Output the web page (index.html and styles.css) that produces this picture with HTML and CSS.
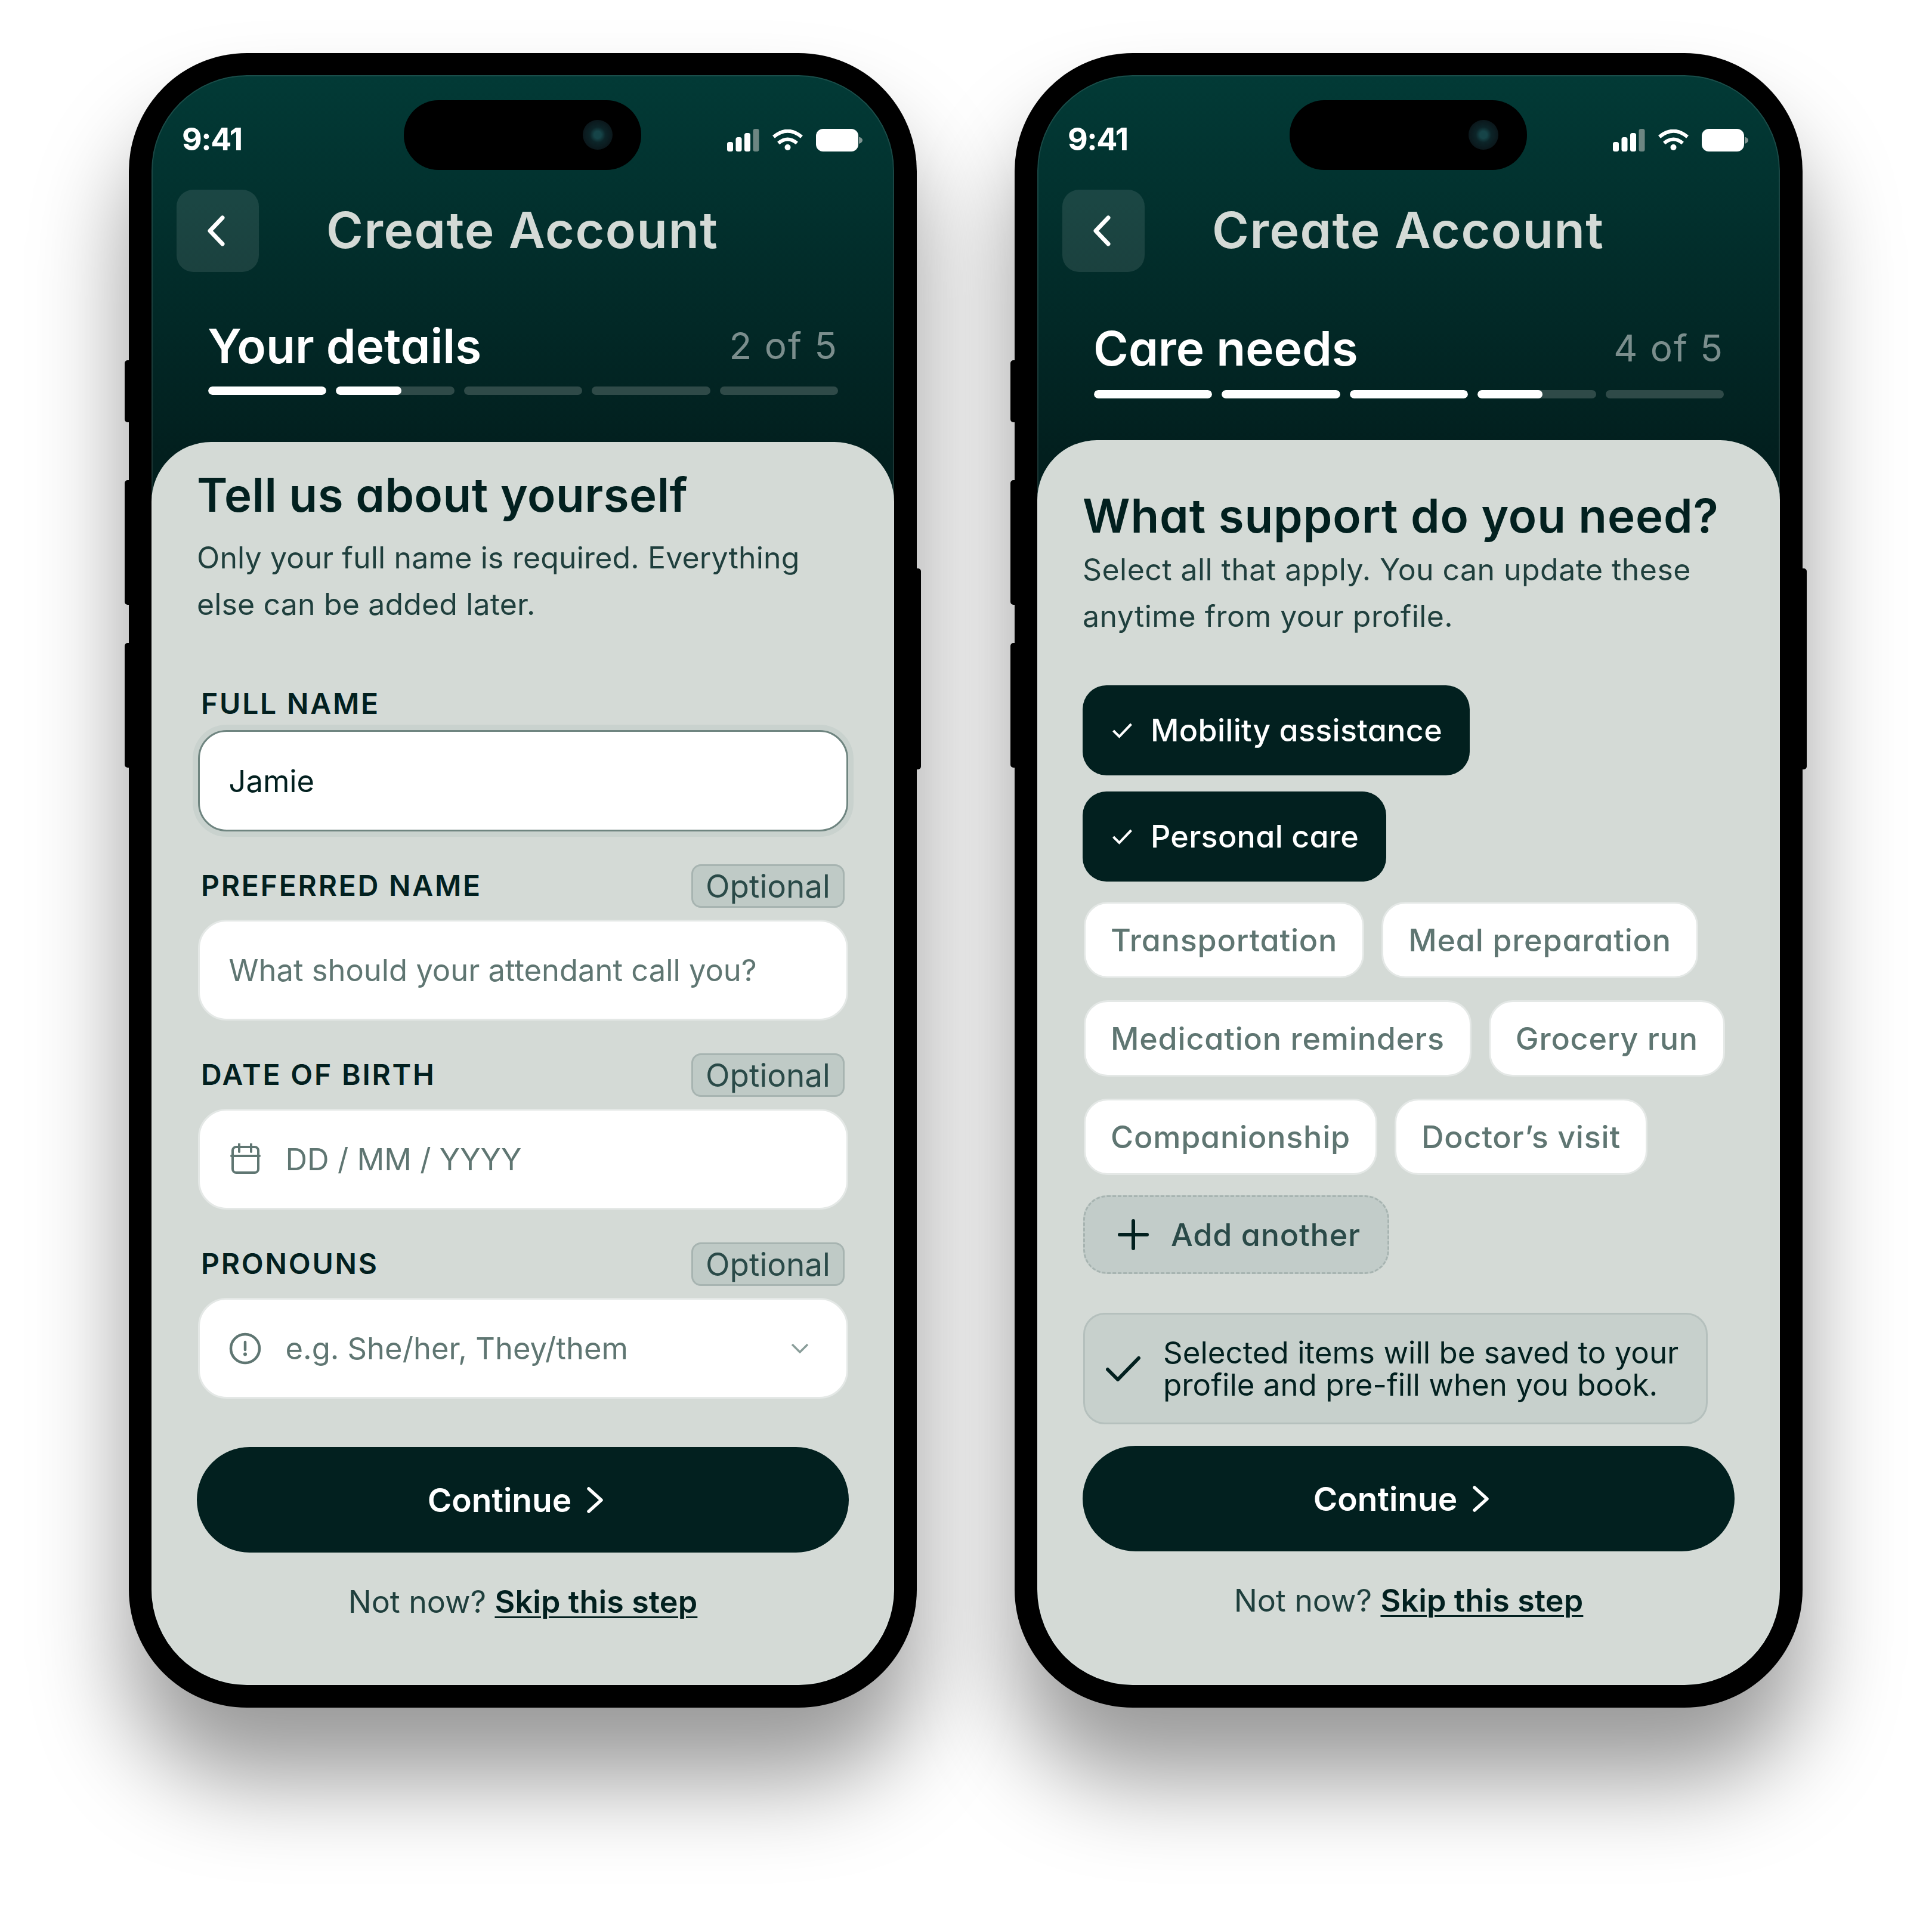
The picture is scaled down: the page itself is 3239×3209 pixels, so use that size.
FILE: index.html
```html
<!DOCTYPE html>
<html lang="en">
<head>
<meta charset="utf-8">
<title>Create Account</title>
<link rel="stylesheet" href="styles.css">
</head>
<body>
<main class="stage">

<section class="phone">
  <span class="side side-a"></span><span class="side side-b"></span><span class="side side-c"></span><span class="side side-d"></span>
  <div class="screen">
    <div class="island"><span class="camera"></span></div>
    <div class="status">
      <span class="time">9:41</span>
      <div class="status-icons">
        <svg class="ic-signal" viewBox="0 0 54 38"><rect x="0" y="22" width="10" height="16" rx="3.5" fill="#fff"/><rect x="14.500" y="14" width="10" height="24" rx="3.500" fill="#fff"/><rect x="29" y="7" width="10" height="31" rx="3.500" fill="#fff"/><rect x="43.500" y="0" width="10" height="38" rx="3.500" fill="#6d8682"/></svg>
        <svg class="ic-wifi" viewBox="0 0 51 36"><path d="M2 12.500Q25.500 -7 49 12.500" fill="none" stroke="#fff" stroke-width="6"/><path d="M10 23Q25.500 10 41 23" fill="none" stroke="#fff" stroke-width="6"/><circle cx="25.500" cy="30" r="5" fill="#fff"/></svg>
        <svg class="ic-battery" viewBox="0 0 78 38"><rect x="0" y="0" width="71" height="38" rx="12" fill="#fff"/><path d="M72 13.500Q78 15 78 19Q78 23 72 25Z" fill="#7f9592"/></svg>
      </div>
    </div>
    <div class="nav">
      <button class="back"><svg viewBox="0 0 30 52"><path d="M26 4 5 26l21 22" fill="none" stroke="#fff" stroke-width="7" stroke-linecap="round" stroke-linejoin="round"/></svg></button>
      <h1 class="nav-title">Create Account</h1>
    </div>
    <div class="step">
      <div class="step-row"><h2 class="step-name">Your details</h2><span class="step-count">2 of 5</span></div>
      <div class="progress">
        <span class="seg"><i class="fill full"></i></span>
        <span class="seg"><i class="fill half"></i></span>
        <span class="seg"></span><span class="seg"></span><span class="seg"></span>
      </div>
    </div>
    <div class="card">
      <h3 class="card-title">Tell us about yourself</h3>
      <p class="card-sub">Only your full name is required. Everything else can be added later.</p>

      <div class="label-only"><label class="label">FULL NAME</label></div>
      <div class="input focused"><span class="value">Jamie</span></div>

      <div class="label-row"><label class="label">PREFERRED NAME</label><span class="optional">Optional</span></div>
      <div class="input"><span class="ph">What should your attendant call you?</span></div>

      <div class="label-row"><label class="label">DATE OF BIRTH</label><span class="optional">Optional</span></div>
      <div class="input">
        <svg class="ic-field" viewBox="0 0 54 54"><g fill="none" stroke="#5f7672" stroke-width="4"><rect x="6" y="6" width="43" height="43" rx="6"/><path d="M4 21h47M17 0v14M37 0v14" stroke-linecap="round"/></g></svg>
        <span class="ph">DD / MM / YYYY</span>
      </div>

      <div class="label-row"><label class="label">PRONOUNS</label><span class="optional">Optional</span></div>
      <div class="input">
        <svg class="ic-field" viewBox="0 0 54 54"><circle cx="27" cy="27" r="24" fill="none" stroke="#5f7672" stroke-width="4.500"/><path d="M27 16v13" stroke="#5f7672" stroke-width="4.500" stroke-linecap="round"/><circle cx="27" cy="36.500" r="3" fill="#5f7672"/></svg>
        <span class="ph">e.g. She/her, They/them</span>
        <svg class="ic-caret" viewBox="0 0 30 17"><path d="M2 2l13 13L28 2" fill="none" stroke="#8a9e9a" stroke-width="3.500"/></svg>
      </div>

      <button class="cta cta-form">Continue <svg viewBox="0 0 28 44"><path d="M3 3l21 19L3 41" fill="none" stroke="#fff" stroke-width="5.500" stroke-linecap="round" stroke-linejoin="round"/></svg></button>
      <p class="skip">Not now? <a class="skip-link">Skip this step</a></p>
    </div>
  </div>
</section>

<section class="phone">
  <span class="side side-a"></span><span class="side side-b"></span><span class="side side-c"></span><span class="side side-d"></span>
  <div class="screen care">
    <div class="island"><span class="camera"></span></div>
    <div class="status">
      <span class="time">9:41</span>
      <div class="status-icons">
        <svg class="ic-signal" viewBox="0 0 54 38"><rect x="0" y="22" width="10" height="16" rx="3.5" fill="#fff"/><rect x="14.500" y="14" width="10" height="24" rx="3.500" fill="#fff"/><rect x="29" y="7" width="10" height="31" rx="3.500" fill="#fff"/><rect x="43.500" y="0" width="10" height="38" rx="3.500" fill="#6d8682"/></svg>
        <svg class="ic-wifi" viewBox="0 0 51 36"><path d="M2 12.500Q25.500 -7 49 12.500" fill="none" stroke="#fff" stroke-width="6"/><path d="M10 23Q25.500 10 41 23" fill="none" stroke="#fff" stroke-width="6"/><circle cx="25.500" cy="30" r="5" fill="#fff"/></svg>
        <svg class="ic-battery" viewBox="0 0 78 38"><rect x="0" y="0" width="71" height="38" rx="12" fill="#fff"/><path d="M72 13.500Q78 15 78 19Q78 23 72 25Z" fill="#7f9592"/></svg>
      </div>
    </div>
    <div class="nav">
      <button class="back"><svg viewBox="0 0 30 52"><path d="M26 4 5 26l21 22" fill="none" stroke="#fff" stroke-width="7" stroke-linecap="round" stroke-linejoin="round"/></svg></button>
      <h1 class="nav-title">Create Account</h1>
    </div>
    <div class="step">
      <div class="step-row"><h2 class="step-name">Care needs</h2><span class="step-count">4 of 5</span></div>
      <div class="progress">
        <span class="seg"><i class="fill full"></i></span>
        <span class="seg"><i class="fill full"></i></span>
        <span class="seg"><i class="fill full"></i></span>
        <span class="seg"><i class="fill half"></i></span>
        <span class="seg"></span>
      </div>
    </div>
    <div class="card">
      <h3 class="card-title">What support do you need?</h3>
      <p class="card-sub">Select all that apply. You can update these anytime from your profile.</p>

      <div class="chips">
        <div class="chip-row"><span class="chip selected"><svg viewBox="0 0 35 27"><path d="M2.500 14l10 10L32.500 3" fill="none" stroke="#fff" stroke-width="4"/></svg>Mobility assistance</span></div>
        <div class="chip-row tight"><span class="chip selected"><svg viewBox="0 0 35 27"><path d="M2.500 14l10 10L32.500 3" fill="none" stroke="#fff" stroke-width="4"/></svg>Personal care</span></div>
        <div class="chip-row after-selected"><span class="chip">Transportation</span><span class="chip">Meal preparation</span></div>
        <div class="chip-row"><span class="chip">Medication reminders</span><span class="chip">Grocery run</span></div>
        <div class="chip-row"><span class="chip">Companionship</span><span class="chip">Doctor’s visit</span></div>
        <div class="chip-row after-selected"><span class="chip add"><svg viewBox="0 0 52 52"><path d="M26 3v46M3 26h46" fill="none" stroke="#02201f" stroke-width="6" stroke-linecap="round"/></svg>Add another</span></div>
      </div>

      <div class="notice">
        <svg viewBox="0 0 58 42"><path d="M3 22l17 17L55 3" fill="none" stroke="#02201f" stroke-width="6" stroke-linecap="round" stroke-linejoin="round"/></svg>
        <p class="notice-text">Selected items will be saved to your profile and pre-fill when you book.</p>
      </div>

      <button class="cta cta-chips">Continue <svg viewBox="0 0 28 44"><path d="M3 3l21 19L3 41" fill="none" stroke="#fff" stroke-width="5.500" stroke-linecap="round" stroke-linejoin="round"/></svg></button>
      <p class="skip">Not now? <a class="skip-link">Skip this step</a></p>
    </div>
  </div>
</section>

</main>
</body>
</html>
```
FILE: styles.css
```css
* { box-sizing: border-box; }
html, body { margin: 0; padding: 0; background: #fff; }
body { font-family: Inter, "Liberation Sans", sans-serif; color: #02201f; width: 3239px; height: 3209px; overflow: hidden; }
h1, h2, h3, p { margin: 0; }

.stage { display: flex; gap: 164px; padding: 89px 0 0 216px; }

.phone { position: relative; flex: none; width: 1321px; height: 2774px; padding: 37px 38px 38px; background: #000; border-radius: 198px; box-shadow: 0 120px 160px rgba(0,0,0,.4); }
.side { position: absolute; width: 12px; background: #000; border-radius: 5px; }
.side-a { left: -7px; top: 515px; height: 104px; }
.side-b { left: -7px; top: 716px; height: 209px; }
.side-c { left: -7px; top: 989px; height: 209px; }
.side-d { right: -7px; top: 864px; height: 337px; }

.screen { position: relative; display: flex; flex-direction: column; height: 100%; border-radius: 160px; overflow: hidden; background: linear-gradient(180deg, #023a36 0, #021f1e 640px); }
.screen::after { content: ""; position: absolute; inset: 0; border-radius: 160px; border: 2px solid rgba(255,255,255,.1); pointer-events: none; }

.island { position: absolute; left: 423px; top: 42px; width: 398px; height: 117px; border-radius: 58px; background: #000; }
.camera { position: absolute; left: 300px; top: 33px; width: 50px; height: 50px; border-radius: 50%; background: radial-gradient(circle at 50% 50%, #164448 0 6px, #0c2428 13px, #0b181c 24px); }

.status { display: flex; align-items: center; justify-content: space-between; height: 192px; padding: 26px 53px 0 51px; }
.time { margin-bottom: 4px; font-size: 52px; font-weight: 700; color: #fff; letter-spacing: -1.500px; }
.status-icons { display: flex; align-items: center; gap: 22px; }
.ic-signal { width: 54px; height: 38px; }
.ic-wifi { width: 51px; height: 36px; }
.ic-battery { width: 78px; height: 38px; }

.nav { display: flex; align-items: center; gap: 113px; height: 138px; padding-left: 42px; }
.back { flex: none; display: flex; align-items: center; justify-content: center; width: 138px; height: 138px; padding: 0 7px 0 0; border: 0; border-radius: 28px; background: rgba(255,255,255,.1); }
.back svg { width: 30px; height: 52px; }
.nav-title { margin-bottom: 2px; font-size: 84px; font-weight: 600; line-height: 100px; color: #d4dad6; font-feature-settings: "cv11"; letter-spacing: 1.500px; }

.step { padding: 0 94px 0 94px; }
.step-row { display: flex; align-items: center; justify-content: space-between; height: 100px; margin-top: 74px; }
.care .step-row { margin-top: 78px; }
.step-name { font-size: 80px; font-weight: 600; line-height: 100px; color: #fff; font-feature-settings: "cv11"; }
.step-count { font-size: 62px; line-height: 100px; color: rgba(255,255,255,.48); letter-spacing: 2px; }
.progress { display: flex; gap: 16px; margin: 18px 0 0 1px; }
.care .progress { margin-top: 20px; }
.seg { flex: 1; height: 14px; border-radius: 7px; background: #2f4a48; overflow: hidden; }
.fill { display: block; height: 100%; border-radius: 7px; background: #fff; }
.full { width: 100%; }
.half { width: 55%; }

.card { flex: 1; margin-top: 79px; padding: 39px 76px 0; border-radius: 100px 100px 0 0; background: #d4dad6; }
.care .card { margin-top: 70px; padding-top: 77px; }
.card-title { font-size: 78px; font-weight: 600; line-height: 100px; letter-spacing: .5px; font-feature-settings: "cv11"; }
.care .card-title { letter-spacing: .9px; }
.card-sub { margin-top: 16px; font-size: 50px; line-height: 78px; letter-spacing: .15px; color: #1f3f3d; }
.care .card-sub { margin-top: 1px; letter-spacing: .43px; }

.label-only { display: flex; align-items: center; height: 60px; margin-top: 97px; padding-left: 7px; }
.label-row { display: flex; align-items: center; justify-content: space-between; height: 73px; margin-top: 55px; padding: 0 7px; }
.label-only + .input { margin-top: 15px; }
.label-row + .input { margin-top: 20px; }
.label { font-size: 48px; font-weight: 600; letter-spacing: 2.800px; color: #02201f; }
.label-row .label { margin-bottom: 3px; }
.optional { display: flex; align-items: center; justify-content: center; width: 257px; height: 73px; border: 3px solid #a7b4b1; border-radius: 16px; background: #bfcac6; color: #2a4a48; font-size: 53px; }

.input { display: flex; align-items: center; gap: 41px; height: 169px; margin: 0 1.500px; padding: 0 63px 0 49px; border: 3px solid #e4e8e6; border-radius: 48px; background: #fff; font-size: 50.700px; }
.input.focused { height: 170px; border-color: #6f8580; box-shadow: 0 0 0 9px #c9d2ce; }
.value { color: #02201f; }
.ph { color: #5f7672; }
.ic-field { flex: none; width: 54px; height: 54px; }
.ic-caret { flex: none; width: 30px; height: 17px; margin-left: auto; }

.cta { display: flex; align-items: center; justify-content: center; gap: 26px; width: 100%; height: 177px; padding: 0 24px 0 0; border: 0; border-radius: 89px; background: #02201f; color: #fff; font-family: inherit; font-size: 55px; font-weight: 600; }
.cta svg { width: 28px; height: 44px; }
.cta-form { margin-top: 81px; }
.cta-chips { margin-top: 36px; }

.skip { margin-top: 44px; font-size: 52px; line-height: 78px; letter-spacing: -.1px; text-align: center; color: #1f3f3d; }
.skip-link { font-weight: 600; letter-spacing: .15px; color: #02201f; text-decoration: underline; text-decoration-thickness: 3px; text-underline-offset: 6px; }

.chips { margin-top: 77px; }
.chip-row { display: flex; gap: 29px; margin-top: 37px; padding-left: 2px; }
.chip-row:first-child { margin-top: 0; padding-left: 0; }
.chip-row.tight { margin-top: 27px; padding-left: 0; }
.chip-row.after-selected { margin-top: 34px; }
.chip { display: flex; align-items: center; height: 128px; padding: 0 42px; border: 3px solid #e4e8e6; border-radius: 40px; background: #fff; color: #5f7672; font-size: 52px; font-weight: 500; letter-spacing: .8px; font-feature-settings: "cv11"; white-space: nowrap; }
.chip.selected { gap: 30px; height: 151px; padding: 0 46px 0 49px; border: 0; background: #02201f; color: #fff; letter-spacing: .3px; }
.chip.selected svg { width: 35px; height: 27px; }
.chip.add { gap: 37px; height: 132px; margin-left: -1px; padding: 0 45px 0 55px; border: 3px dashed #a7b4b1; background: #c2ccc9; color: #2a4a48; }
.chip.add svg { width: 52px; height: 52px; }

.notice { display: flex; align-items: center; gap: 38px; width: 1047px; height: 187px; margin: 65px 0 0 1px; padding: 0 30px 0 35px; border: 3px solid #b5c0bd; border-radius: 36px; background: #c7d0cc; }
.notice svg { flex: none; width: 58px; height: 42px; }
.notice-text { font-size: 51px; line-height: 54px; color: #02201f; }
```
